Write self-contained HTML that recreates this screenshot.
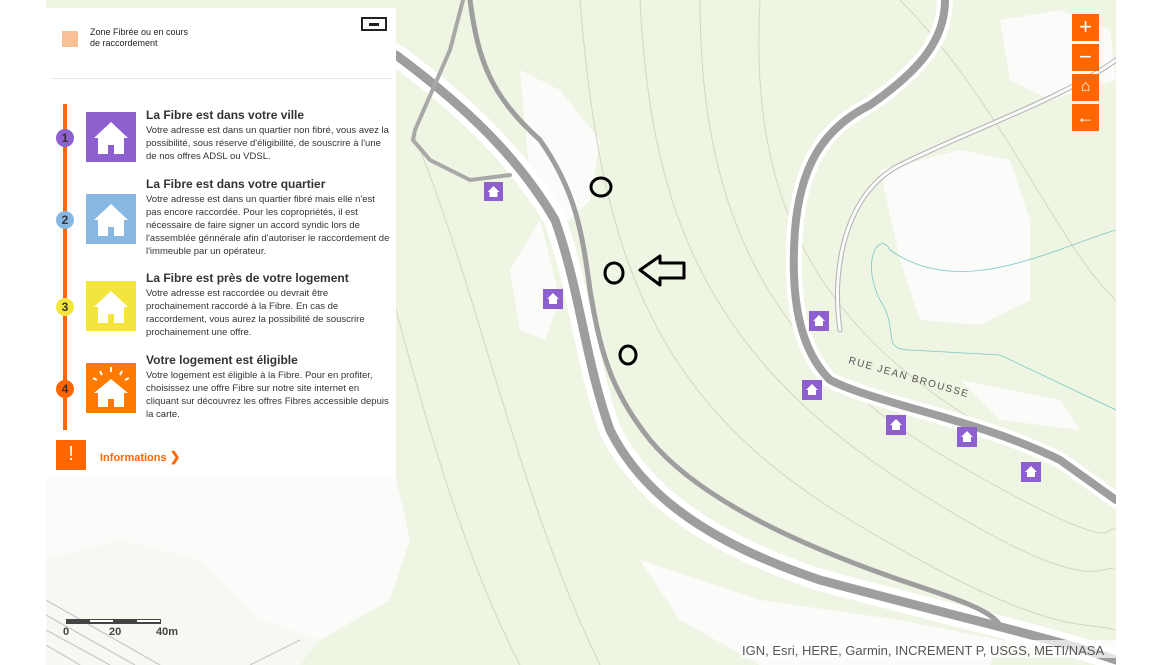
<!DOCTYPE html>
<html><head><meta charset="utf-8"><style>
body{margin:0;width:1152px;height:665px;background:#fff;position:relative;overflow:hidden;font-family:"Liberation Sans",Arial,sans-serif}
#map{position:absolute;left:46px;top:0;width:1070px;height:665px;background:#eef5e3}
#panel{position:absolute;left:46px;top:8px;width:350px;height:470px;background:#fff}
.t{position:absolute;left:100px;font-size:12px;font-weight:bold;color:#333}
.d{position:absolute;left:100px;font-size:9.5px;line-height:13px;color:#333;width:245px}
.ic{position:absolute;left:40px;width:50px;height:50px}
.n{position:absolute;left:10px;width:18px;height:18px;border-radius:50%;font-size:12px;font-weight:bold;color:#333;text-align:center;line-height:18px}
.btn{position:absolute;left:1072px;width:27px;height:27px;background:#ff6600;color:#fff;text-align:center;font-size:22px;line-height:26px}
</style></head><body>
<div id="map"><svg width="1070" height="665" viewBox="46 0 1070 665" style="position:absolute;left:0;top:0">
<g fill="#fbfbfa">
<path d="M520 70 L560 90 L600 140 L590 200 L560 230 L530 180 Z"/>
<path d="M540 220 L560 300 L545 340 L520 330 L510 270 Z"/>
<path d="M880 170 L960 150 L1010 160 L1030 220 L1030 300 L980 325 L920 320 L900 260 Z"/>
<path d="M1000 20 L1060 10 L1110 30 L1116 80 L1050 100 L1010 80 Z"/>
<path d="M46 478 L396 478 L410 540 L390 600 L320 640 L260 620 L200 560 L120 540 L46 560 Z"/>
<path d="M46 560 L120 540 L200 560 L260 620 L320 640 L300 665 L46 665 Z" opacity="0.6"/>
<path d="M640 560 L760 600 L900 620 L1000 640 L990 665 L760 665 L680 620 Z"/>
<path d="M960 380 L1060 400 L1080 430 L1000 420 Z"/>
</g>
<g fill="none" stroke="#d8d4c4" stroke-width="1">
<path d="M640 0 C650 200 700 350 900 480 S1100 560 1116 570"/>
<path d="M700 0 C700 200 760 350 950 460 S1100 520 1116 530"/>
<path d="M760 0 C750 180 800 320 990 430"/>
<path d="M580 0 C600 250 650 400 850 520 S1080 620 1116 630"/>
<path d="M420 150 C480 300 520 500 600 665"/>
<path d="M380 250 C420 400 460 550 520 665"/>
<path d="M900 0 C1000 100 1060 250 1116 300"/>
</g>
<g fill="none" stroke="#c8c8c8" stroke-width="1.2"><path d="M46 600 L160 665"/><path d="M46 615 L135 665"/><path d="M46 630 L110 665"/><path d="M46 645 L80 665"/><path d="M250 665 L300 640"/></g>
<path d="M1116 230 C1050 250 960 300 890 250 C880 230 860 260 880 300 C900 330 880 350 910 350 L1000 355 L1116 410" fill="none" stroke="#7cc7c4" stroke-width="0.8"/>
<g fill="none" stroke-linecap="round" stroke-linejoin="round">
<path d="M396 55 C470 110 520 160 555 220 C580 290 585 360 610 430 C640 490 700 540 820 580 C950 615 1060 640 1116 660" stroke="#fff" stroke-width="22"/>
<path d="M396 55 C470 110 520 160 555 220 C580 290 585 360 610 430 C640 490 700 540 820 580 C950 615 1060 640 1116 660" stroke="#9e9e9e" stroke-width="9"/>
<path d="M470 0 C478 60 490 95 540 140 C575 190 582 230 590 290 C600 350 610 390 650 440 C700 500 800 545 900 580 C960 600 990 610 1000 625" stroke="#9e9e9e" stroke-width="5"/>
<path d="M463 0 L450 50 L415 130 L413 140 L430 160 L470 180 L510 175" stroke="#a8a8a8" stroke-width="4"/>
<path d="M945 0 C945 40 920 70 870 105 C820 130 800 170 795 230 C790 300 800 350 830 380 C880 405 980 420 1060 460 L1116 500" stroke="#fff" stroke-width="16"/>
<path d="M945 0 C945 40 920 70 870 105 C820 130 800 170 795 230 C790 300 800 350 830 380 C880 405 980 420 1060 460 L1116 500" stroke="#9e9e9e" stroke-width="8"/>
<path d="M1116 60 C1060 100 970 130 900 165 C850 190 830 260 840 330" stroke="#b0b0b0" stroke-width="5"/>
<path d="M1116 60 C1060 100 970 130 900 165 C850 190 830 260 840 330" stroke="#fbfbfb" stroke-width="3"/>
</g>
<text x="848" y="363" font-size="10" fill="#555" transform="rotate(16 848 363)" letter-spacing="1.5">RUE JEAN BROUSSE</text>
<g fill="#8e5fce">
<rect x="484" y="182" width="19" height="19"/><rect x="543" y="289" width="20" height="20"/><rect x="809" y="311" width="20" height="20"/><rect x="802" y="380" width="20" height="20"/><rect x="886" y="415" width="20" height="20"/><rect x="957" y="427" width="20" height="20"/><rect x="1021" y="462" width="20" height="20"/></g>
<g fill="#fff"><path d="M493.5 186 l-6 6 h2 v5 h8 v-5 h2z"/><path d="M553 293 l-6 6 h2 v5 h8 v-5 h2z"/><path d="M819 315 l-6 6 h2 v5 h8 v-5 h2z"/><path d="M812 384 l-6 6 h2 v5 h8 v-5 h2z"/><path d="M896 419 l-6 6 h2 v5 h8 v-5 h2z"/><path d="M967 431 l-6 6 h2 v5 h8 v-5 h2z"/><path d="M1031 466 l-6 6 h2 v5 h8 v-5 h2z"/></g>
<g fill="none" stroke="#000" stroke-width="3">
<ellipse cx="601" cy="187" rx="10" ry="9"/><ellipse cx="614" cy="273" rx="9" ry="10"/><ellipse cx="628" cy="355" rx="8" ry="9"/>
<path d="M640 270 L660 256 L660 263 L684 263 L684 278 L660 278 L660 285 Z" stroke-linejoin="round"/>
</g>
<rect x="741" y="640" width="375" height="18" fill="#fff" opacity="0.7"/>
<text x="742" y="655" font-size="13" fill="#555">IGN, Esri, HERE, Garmin, INCREMENT P, USGS, METI/NASA</text>
<rect x="66" y="619" width="95" height="5" fill="#444"/><rect x="90" y="620" width="23" height="2" fill="#fff"/><rect x="137" y="620" width="23" height="2" fill="#fff"/>
<g font-size="11" fill="#444" font-weight="bold"><text x="63" y="635">0</text><text x="109" y="635">20</text><text x="156" y="635">40m</text></g>
</svg></div>
<div class="btn" style="top:14px">+</div><div class="btn" style="top:44px">−</div><div class="btn" style="top:74px;font-size:16px">⌂</div><div class="btn" style="top:104px;font-size:18px">←</div>
<div id="panel">
<div style="position:absolute;left:16px;top:23px;width:16px;height:16px;background:#f9bf96"></div>
<div style="position:absolute;left:44px;top:19px;font-size:9px;line-height:11px;color:#222">Zone Fibrée ou en cours<br>de raccordement</div>
<div style="position:absolute;left:315px;top:9px;width:26px;height:14px;border:2px solid #222;box-sizing:border-box"><div style="margin:4px auto;width:10px;height:3px;background:#222"></div></div>
<div style="position:absolute;left:5px;top:70px;width:340px;height:1px;background:#e5e5e5"></div>
<div style="position:absolute;left:17px;top:96px;width:4px;height:326px;background:#ff6600"></div>
<div class="n" style="top:121px;background:#8e5fce">1</div>
<div class="n" style="top:203px;background:#86b8e2">2</div>
<div class="n" style="top:290px;background:#f3e53d">3</div>
<div class="n" style="top:372px;background:#ff6600">4</div>
<svg class="ic" style="top:104px;background:#8e5fce" viewBox="0 0 50 50"><path d="M25 10 L8 26 H12 V42 H22 V33 H28 V42 H38 V26 H42 Z" fill="#fff"/></svg>
<svg class="ic" style="top:186px;background:#86b8e2" viewBox="0 0 50 50"><path d="M25 10 L8 26 H12 V42 H22 V33 H28 V42 H38 V26 H42 Z" fill="#fff"/></svg>
<svg class="ic" style="top:273px;background:#f3e53d" viewBox="0 0 50 50"><path d="M25 10 L8 26 H12 V42 H22 V33 H28 V42 H38 V26 H42 Z" fill="#fff"/></svg>
<svg class="ic" style="top:355px;background:#ff7a00" viewBox="0 0 50 50"><path d="M25 16 L8 30 H12 V44 H22 V36 H28 V44 H38 V30 H42 Z" fill="#fff"/><g stroke="#fff" stroke-width="2"><path d="M25 4v5M14 8l2 4M36 8l-2 4M7 15l4 2M43 15l-4 2"/></g></svg>
<div class="t" style="top:100px">La Fibre est dans votre ville</div>
<div class="d" style="top:116px">Votre adresse est dans un quartier non fibré, vous avez la possibilité, sous réserve d'éligibilité, de souscrire à l'une de nos offres ADSL ou VDSL.</div>
<div class="t" style="top:169px">La Fibre est dans votre quartier</div>
<div class="d" style="top:185px">Votre adresse est dans un quartier fibré mais elle n'est<br>pas encore raccordée. Pour les copropriétés, il est nécessaire de faire signer un accord syndic lors de l'assemblée génnérale afin d'autoriser le raccordement de l'immeuble par un opérateur.</div>
<div class="t" style="top:263px">La Fibre est près de votre logement</div>
<div class="d" style="top:279px">Votre adresse est raccordée ou devrait être<br>prochainement raccordé à la Fibre. En cas de<br>raccordement, vous aurez la possibilité de souscrire prochainement une offre.</div>
<div class="t" style="top:345px">Votre logement est éligible</div>
<div class="d" style="top:361px">Votre logement est éligible à la Fibre. Pour en profiter, choisissez une offre Fibre sur notre site internet en cliquant sur découvrez les offres Fibres accessible depuis la carte.</div>
<div style="position:absolute;left:10px;top:432px;width:30px;height:30px;background:#ff6600;color:#fff;text-align:center;font-size:20px;line-height:28px">!</div>
<div style="position:absolute;left:54px;top:441px;font-size:11px;font-weight:bold;color:#ff6600">Informations <span style="font-size:13px">❯</span></div>
</div>
</body></html>
